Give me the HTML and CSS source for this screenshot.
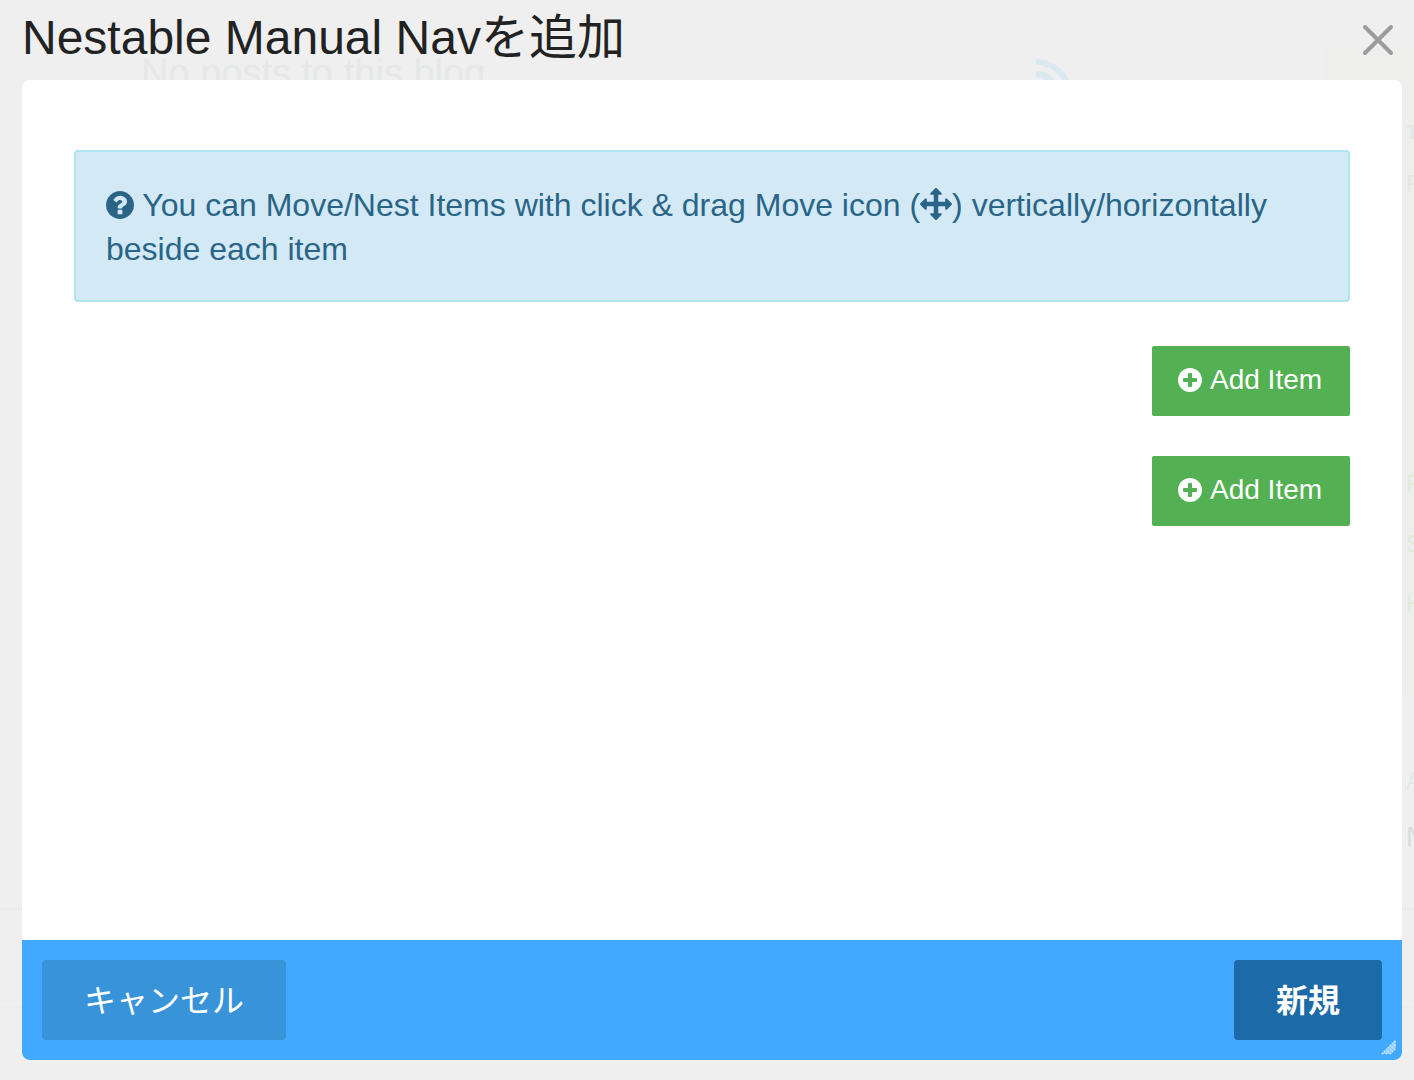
FILE: index.html
```
<!DOCTYPE html>
<html lang="ja">

<head>
    <meta charset="utf-8">
    <meta name="viewport" content="width=device-width, initial-scale=1">
    <title>Nestable Manual Navを追加</title>
    <link rel="stylesheet" href="styles.css">
</head>

<body>
    <!-- page behind the modal -->
    <div class="page" aria-hidden="true">
        <div class="page-top">
            <div class="page-main">
                <p class="page-empty">No posts to this blog</p>
                <svg class="page-rss" viewBox="0 0 36 36">
                    <path d="M0 3a33 33 0 0 1 33 33M0 15a21 21 0 0 1 21 21" fill="none" stroke="currentColor" stroke-width="6" />
                </svg>
            </div>
            <div class="page-side">
                <div class="side-label">T</div>
                <div class="side-text">F</div>
                <ul class="side-links">
                    <li>F</li>
                    <li>S</li>
                    <li>H</li>
                </ul>
            </div>
        </div>
        <div class="page-more">
            <div class="more-label">A</div>
            <div class="more-text">N</div>
        </div>
        <div class="page-footer"></div>
    </div>

    <div class="modal" role="dialog" aria-labelledby="modal-title">
        <div class="modal-header">
            <h1 id="modal-title">Nestable Manual Navを追加</h1>
            <button class="close" type="button" aria-label="閉じる">
                <svg viewBox="0 0 32 32">
                    <path d="M3 3l26 26M29 3L3 29" fill="none" stroke="currentColor" stroke-width="4" stroke-linecap="round" />
                </svg>
            </button>
        </div>

        <div class="modal-box">
            <div class="modal-body">
                <div class="alert">
                    <svg class="icon-help" viewBox="0 0 1536 1536">
                        <path fill="currentColor" d="M896 1248v-192q0-14-9-23t-23-9H672q-14 0-23 9t-9 23v192q0 14 9 23t23 9h192q14 0 23-9t9-23zm256-672q0-88-55.500-163T958 297t-170-41q-243 0-371 213-15 24 8 42l132 100q7 6 19 6 16 0 25-12 53-68 86-92 34-24 86-24 48 0 85.500 26t37.500 59q0 38-20 61t-68 45q-63 28-115.500 86.500T640 892v36q0 14 9 23t23 9h192q14 0 23-9t9-23q0-19 21.500-49.500T972 829q32-18 49-28.500t46-35 44.500-48 28-60.500 12.500-81zm384 192q0 209-103 385.500T1153.500 1433 768 1536t-385.500-103T103 1153.500 0 768t103-385.500T382.500 103 768 0t385.500 103T1433 382.500 1536 768z" />
                    </svg>
                    You can Move/Nest Items with click &amp; drag Move icon (<svg class="icon-move" viewBox="0 0 1792 1792">
                        <path fill="currentColor" d="M1792 896q0 26-19 45l-256 256q-19 19-45 19t-45-19-19-45v-128h-384v384h128q26 0 45 19t19 45-19 45l-256 256q-19 19-45 19t-45-19l-256-256q-19-19-19-45t19-45 45-19h128v-384H384v128q0 26-19 45t-45 19-45-19L19 941q-19-19-19-45t19-45l256-256q19-19 45-19t45 19 19 45v128h384V384H640q-26 0-45-19t-19-45 19-45L851 19q19-19 45-19t45 19l256 256q19 19 19 45t-19 45-45 19h-128v384h384V640q0-26 19-45t45-19 45 19l256 256q19 19 19 45z" />
                    </svg>) vertically/horizontally beside each item
                </div>

                <div class="items">
                    <button class="btn-add" type="button">
                        <svg viewBox="0 0 24 24">
                            <path fill="currentColor" fill-rule="evenodd" d="M12 0a12 12 0 1 1 0 24a12 12 0 0 1 0-24zM11 5q-1 0-1 1v4H6q-1 0-1 1v2q0 1 1 1h4v4q0 1 1 1h2q1 0 1-1v-4h4q1 0 1-1v-2q0-1-1-1h-4V6q0-1-1-1z" />
                        </svg>
                        Add Item
                    </button>
                    <button class="btn-add" type="button">
                        <svg viewBox="0 0 24 24">
                            <path fill="currentColor" fill-rule="evenodd" d="M12 0a12 12 0 1 1 0 24a12 12 0 0 1 0-24zM11 5q-1 0-1 1v4H6q-1 0-1 1v2q0 1 1 1h4v4q0 1 1 1h2q1 0 1-1v-4h4q1 0 1-1v-2q0-1-1-1h-4V6q0-1-1-1z" />
                        </svg>
                        Add Item
                    </button>
                </div>
            </div>

            <div class="modal-footer">
                <button class="btn-cancel" type="button">キャンセル</button>
                <button class="btn-save" type="button">新規</button>
                <svg class="resize" viewBox="0 0 16 16">
                    <path class="resize-fill" d="M1 15L15 1v8l-6 6z" />
                    <g fill="none" stroke="currentColor" stroke-width="2" stroke-linecap="round" stroke-dasharray="0 2.830">
                        <path d="M1.500 14.500l13-13" />
                        <path d="M5.500 14.500l9-9" />
                        <path d="M9.500 14.500l5-5" />
                    </g>
                </svg>
            </div>
        </div>
    </div>
</body>

</html>
```
FILE: styles.css
```
* {
    box-sizing: border-box;
}

body {
    margin: 0;
    position: relative;
    background-color: #efefef;
    font-family: "Liberation Sans", "Noto Sans CJK JP", sans-serif;
}

button {
    border: none;
    font-family: inherit;
    cursor: pointer;
}

/* faded page */
.page {
    position: absolute;
    inset: 0;
    overflow: hidden;
    display: flex;
    flex-direction: column;
}

.page-top {
    display: flex;
    padding-top: 47px;
    height: 698px;
}

.page-main {
    flex: 1;
    display: flex;
    justify-content: space-between;
    padding: 4px 254px 0 141px;
}

.page-empty {
    margin: 0;
    font-size: 38px;
    line-height: 44px;
    color: #e6e8e8;
}

.page-rss {
    width: 36px;
    height: 36px;
    margin-top: 8px;
    color: #dae9ef;
}

.page-side {
    width: 88px;
    padding: 70px 0 0 80px;
    overflow: hidden;
    background-color: #eeeeec;
    color: #e6e6e6;
    font-size: 24px;
    line-height: 30px;
}

.side-label {
    font-size: 20px;
    font-weight: bold;
}

.side-text {
    margin-top: 22px;
}

.side-links {
    margin: 255px 0 0;
    padding: 0;
    list-style: none;
    line-height: 60px;
    color: #e1eadb;
}

.page-more {
    flex: 1;
    padding-top: 68px;
    margin-left: auto;
    width: 8px;
    font-size: 24px;
    line-height: 30px;
    color: #e4e7e7;
}

.more-text {
    margin-top: 26px;
    font-size: 28px;
    color: #dcdcdc;
}

.page-footer {
    height: 100px;
    margin-bottom: 72px;
    border-top: 2px solid #ececec;
    border-bottom: 2px solid #ececec;
}

/* modal */
.modal {
    position: relative;
    min-height: 100vh;
    display: flex;
    flex-direction: column;
    padding: 0 12px 20px 22px;
}

.modal-header {
    display: flex;
    justify-content: space-between;
    align-items: center;
    height: 80px;
}

.modal-header h1 {
    margin: 0 0 4px;
    font-size: 48px;
    font-weight: normal;
    line-height: 60px;
    color: #222;
}

.close {
    display: flex;
    padding: 8px;
    background: none;
    color: #999b9c;
}

.close svg {
    width: 32px;
    height: 32px;
}

.modal-box {
    flex: 1;
    display: flex;
    flex-direction: column;
    overflow: hidden;
    border-radius: 8px;
    background-color: #fff;
}

.modal-body {
    flex: 1;
    padding: 70px 52px 40px;
}

.alert {
    padding: 31px 30px 29px;
    border: 2px solid #b2e6ee;
    border-radius: 4px;
    background-color: #d4e9f6;
    color: #2a6587;
    font-size: 32px;
    line-height: 44px;
}

.icon-help {
    width: 28px;
    height: 28px;
    vertical-align: -3px;
}

.icon-move {
    width: 32px;
    height: 32px;
    vertical-align: -4px;
}

.items {
    display: flex;
    flex-direction: column;
    align-items: flex-end;
    gap: 40px;
    margin-top: 44px;
}

.btn-add {
    display: flex;
    align-items: center;
    gap: 8px;
    min-width: 198px;
    height: 70px;
    padding: 0 26px 2px;
    border-radius: 2px;
    background-color: #53b053;
    color: #fff;
    font-size: 28px;
}

.btn-add svg {
    width: 24px;
    height: 24px;
}

.modal-footer {
    position: relative;
    display: flex;
    justify-content: space-between;
    padding: 20px;
    background-color: #41a9ff;
}

.btn-cancel,
.btn-save {
    height: 80px;
    padding: 0 42px 4px;
    border-radius: 4px;
    color: #fff;
    font-size: 32px;
}

.btn-cancel {
    background-color: #3893d9;
}

.btn-save {
    background-color: #1c6aa7;
    font-weight: bold;
}

.resize {
    position: absolute;
    right: 5px;
    bottom: 5px;
    width: 16px;
    height: 16px;
    color: #cbe7ff;
}

.resize-fill {
    fill: #8ccaff;
}
```
